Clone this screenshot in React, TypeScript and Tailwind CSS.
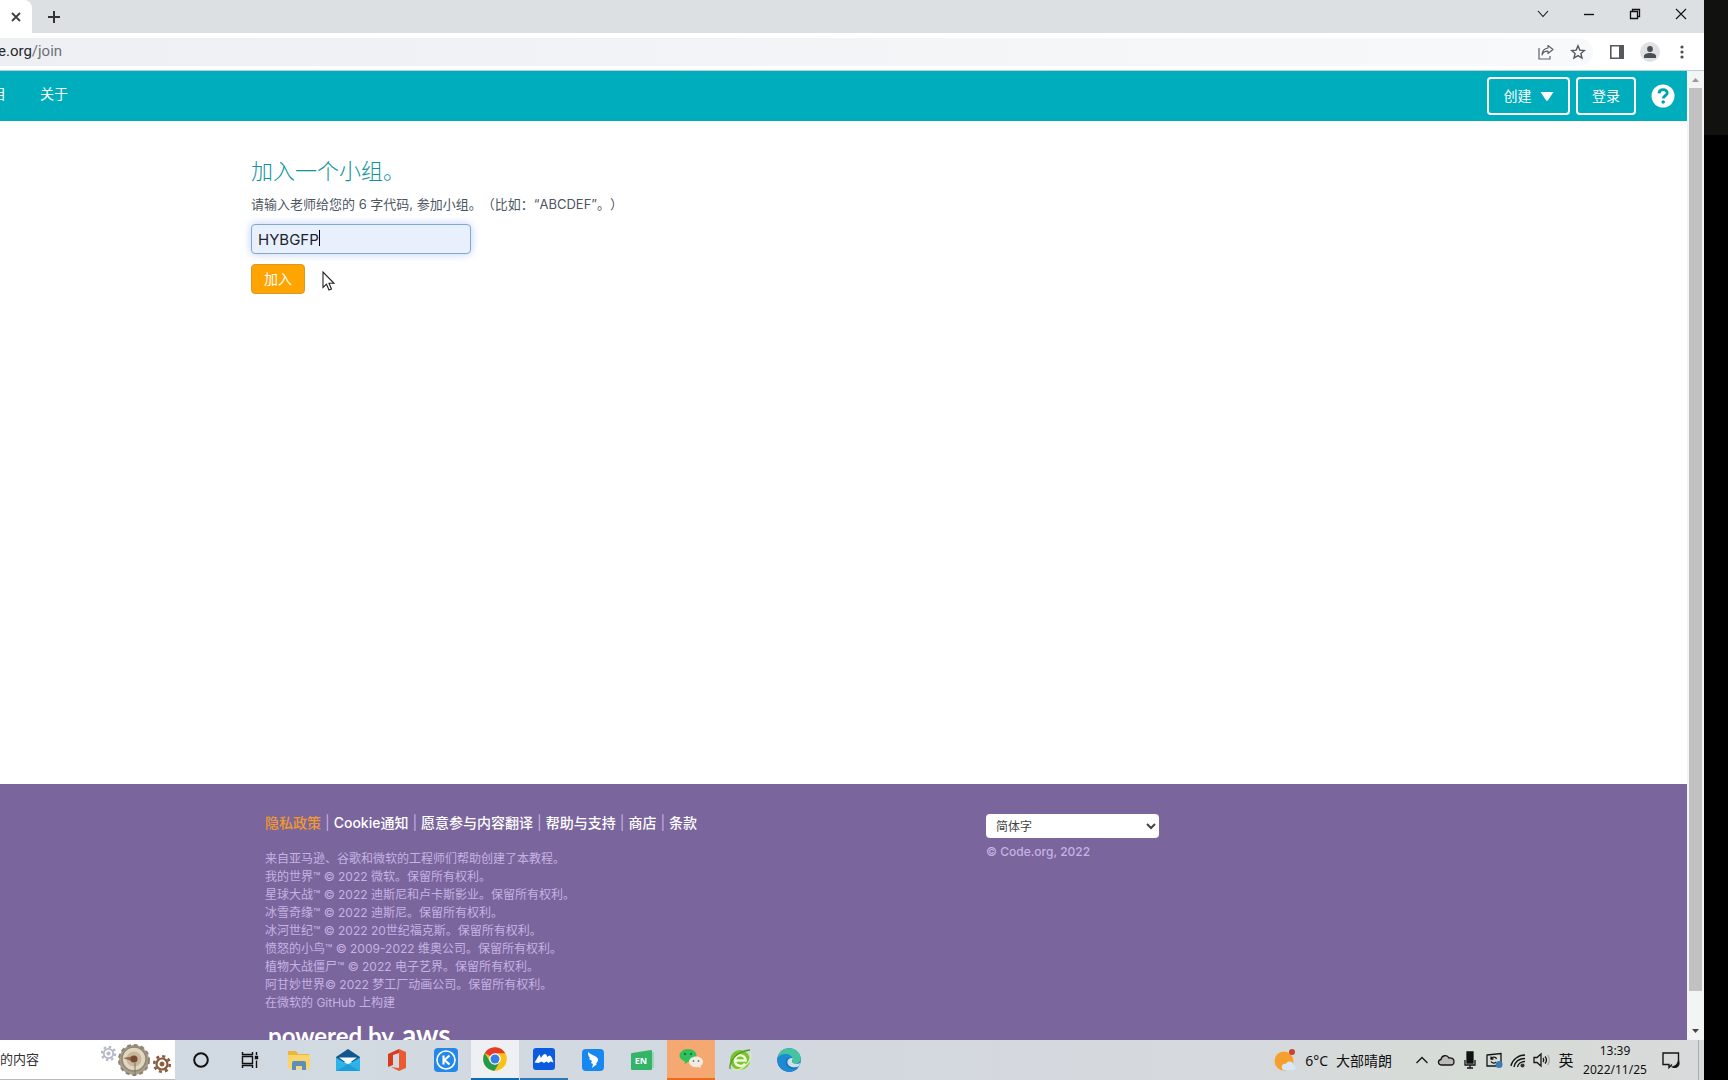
import type { ReactNode } from "react";

const CREDITS = [
  "来自亚马逊、谷歌和微软的工程师们帮助创建了本教程。",
  "我的世界™ © 2022 微软。保留所有权利。",
  "星球大战™ © 2022 迪斯尼和卢卡斯影业。保留所有权利。",
  "冰雪奇缘™ © 2022 迪斯尼。保留所有权利。",
  "冰河世纪™ © 2022 20世纪福克斯。保留所有权利。",
  "愤怒的小鸟™ © 2009-2022 维奥公司。保留所有权利。",
  "植物大战僵尸™ © 2022 电子艺界。保留所有权利。",
  "阿甘妙世界© 2022 梦工厂动画公司。保留所有权利。",
  "在微软的 GitHub 上构建",
];

const FOOTER_LINKS = ["Cookie通知", "愿意参与内容翻译", "帮助与支持", "商店", "条款"];

function WindowButton({ label, children }: { label: string; children: ReactNode }) {
  return (
    <button aria-label={label} className="flex h-7 w-[46px] items-center justify-center">
      <svg width="12" height="12" viewBox="0 0 12 12" fill="none" stroke="#111" strokeWidth="1.1">
        {children}
      </svg>
    </button>
  );
}

function TabStrip() {
  return (
    <div className="flex h-[33px] shrink-0 items-start bg-[#dce0e3]">
      <div className="flex h-full w-8 items-center justify-center rounded-tr-lg bg-white">
        <button aria-label="关闭标签页">
          <svg width="10" height="10" viewBox="0 0 10 10" stroke="#3c4043" strokeWidth="1.8">
            <path d="M1 1l8 8M9 1l-8 8" />
          </svg>
        </button>
      </div>
      <button aria-label="新标签页" className="ml-4 flex h-full items-center">
        <svg width="12" height="12" viewBox="0 0 12 12" stroke="#333" strokeWidth="2">
          <path d="M6 0v12M0 6h12" />
        </svg>
      </button>
      <div className="ml-auto flex">
        <WindowButton label="搜索标签页">
          <path d="M1 3l5 5.5L11 3" />
        </WindowButton>
        <WindowButton label="最小化">
          <path d="M1 6.5h10" strokeWidth="1.4" />
        </WindowButton>
        <WindowButton label="还原">
          <path d="M1.5 3.5h7v7h-7zM3.5 3.5v-2h7v7h-2" strokeWidth="1.3" />
        </WindowButton>
        <WindowButton label="关闭">
          <path d="M1 1l10 10M11 1L1 11" />
        </WindowButton>
      </div>
    </div>
  );
}

function AddressBar() {
  return (
    <div className="flex h-[38px] shrink-0 items-center border-b border-[#b9cfd2] bg-white">
      <div className="flex h-7 flex-1 items-center overflow-hidden rounded-r-full bg-linear-to-r from-[#eeeff3] to-[#f8f9fa] pr-[7px]">
        <span className="-ml-0.5 font-[Roboto] text-[15px] text-[#25282b]">
          e.org<span className="text-[#6d7175]">/join</span>
        </span>
        <button aria-label="分享" className="ml-auto">
          <svg width="16" height="16" viewBox="0 0 16 16" fill="none" stroke="#5f6368" strokeWidth="1.2">
            <path d="M1 4v11h11v-3" />
            <path d="M10 1.5l5 4-5 4V7.2C7 7 5 8.500 4 11c.2-4 2.200-6.500 6-7z" strokeLinejoin="round" />
          </svg>
        </button>
        <button aria-label="为此标签页添加书签" className="ml-4">
          <svg width="16" height="16" viewBox="0 0 16 16" fill="none" stroke="#55595d" strokeWidth="1.4">
            <path d="M8 1.800l1.800 4.300 4.600.4-3.500 3 1.100 4.500L8 11.600 4 14l1.100-4.500-3.500-3 4.600-.4z" />
          </svg>
        </button>
      </div>
      <button aria-label="侧边栏" className="ml-4">
        <svg width="16" height="16" viewBox="0 0 16 16">
          <path d="M1.800 1.800h12.400v12.400H1.800z" fill="none" stroke="#55595d" strokeWidth="1.600" />
          <path d="M10 2h5v12h-5z" fill="#55595d" />
        </svg>
      </button>
      <button aria-label="个人资料" className="ml-[15px] flex size-5 items-center justify-center rounded-full bg-[#dfe1e4]">
        <svg width="14" height="14" viewBox="0 0 14 14" fill="#4b4f54">
          <circle cx="7" cy="4" r="2.900" />
          <path d="M1 13v-2c0-2 3-3 6-3s6 1 6 3v2z" />
        </svg>
      </button>
      <button aria-label="菜单" className="mr-5 ml-5">
        <svg width="4" height="14" viewBox="0 0 4 14" fill="#4b4f54">
          <circle cx="2" cy="2" r="1.600" />
          <circle cx="2" cy="7" r="1.600" />
          <circle cx="2" cy="12" r="1.600" />
        </svg>
      </button>
    </div>
  );
}

function SiteHeader() {
  return (
    <header className="flex h-[50px] shrink-0 items-center bg-[#00adbc] pr-3 text-sm text-white">
      <nav className="flex gap-[34px] pb-1">
        <a href="#projects" className="flex w-1.5 justify-end overflow-hidden">
          目
        </a>
        <a href="#about">关于</a>
      </nav>
      <button className="ml-auto flex h-[38px] w-[83px] items-center justify-center gap-2 rounded border-2 border-white">
        创建
        <svg width="14" height="9" viewBox="0 0 14 9" fill="#fff">
          <path d="M.5 0h13L8 8.300q-1 1-2 0z" />
        </svg>
      </button>
      <button className="ml-1.5 h-[38px] w-[60px] rounded border-2 border-white">登录</button>
      <button aria-label="帮助" className="ml-[15px]">
        <svg width="24" height="24" viewBox="0 0 24 24">
          <circle cx="12" cy="12" r="11.500" fill="#fff" />
          <path d="M8 9.300c.4-5 8.400-4.600 8.200-.3-.1 2.800-3.900 2.700-3.900 5.500" fill="none" stroke="#00a3b2" strokeWidth="2.900" />
          <circle cx="12.200" cy="18" r="1.800" fill="#00a3b2" />
        </svg>
      </button>
    </header>
  );
}

function JoinForm() {
  return (
    <main className="relative flex-1 bg-white pt-[35px] pl-[251px]">
      <form onSubmit={(e) => e.preventDefault()} className="flex flex-col items-start">
        <h1 className="text-[22px] leading-[30px] font-light text-[#0f939d]">加入一个小组。</h1>
        <label htmlFor="code" className="mt-2 text-[13px] leading-5 text-[#4d575f]">
          请输入老师给您的 6 字代码, 参加小组。（比如：“ABCDEF”。）
        </label>
        <input
          id="code"
          defaultValue="HYBGFP"
          className="mt-2.5 h-[30px] w-[220px] rounded border border-[#82a9cc] bg-[#e8f0fe] px-1.5 text-[15px] text-[#20242c] shadow-[0_0_8px_rgba(82,140,236,0.4)] outline-none"
        />
        <button className="mt-2.5 h-[30px] w-[54px] rounded border border-[#d9982a] bg-[#ffa400] text-sm text-white">
          加入
        </button>
      </form>
      {/* text caret */}
      <span className="absolute top-[109px] left-[319px] h-4 w-px bg-black" />
      <svg className="absolute top-[150px] left-[322px]" width="14" height="20" viewBox="0 0 14 20">
        <path d="M1 1v15.500l3.500-3.300 2.500 5.800 2.500-1-2.500-5.700h5z" fill="#fff" stroke="#222" strokeWidth="1.100" />
      </svg>
    </main>
  );
}

function SiteFooter() {
  return (
    <footer className="flex h-64 shrink-0 overflow-hidden bg-[#7a659d] pt-[29px] pl-[265px] text-[#c5b3e2]">
      <div className="w-[721px] shrink-0">
        <div className="flex gap-1 text-sm leading-5 whitespace-nowrap">
          <a href="#privacy" className="font-medium text-[#f0982f]">
            隐私政策
          </a>
          {FOOTER_LINKS.map((link) => (
            <span key={link} className="flex gap-1">
              <span>|</span>
              <a href="#more" className="font-medium text-white">
                {link}
              </a>
            </span>
          ))}
        </div>
        <div className="mt-[17px] text-xs leading-[18px]">
          {CREDITS.map((line) => (
            <p key={line}>{line}</p>
          ))}
        </div>
        <p className="mt-1 flex items-baseline gap-2 pl-[3px] font-[Lato] leading-9 text-white">
          <span className="text-2xl font-bold">powered by</span>
          <span className="text-[28px] font-bold">aws</span>
        </p>
      </div>
      <div>
        <select
          aria-label="语言"
          className="mt-px block h-6 w-[173px] rounded-sm bg-white pl-1.5 text-xs text-[#444]"
          defaultValue="zh"
        >
          <option value="zh">简体字</option>
        </select>
        <p className="mt-1 text-xs leading-5 font-medium">© Code.org, 2022</p>
      </div>
    </footer>
  );
}

function Scrollbar() {
  return (
    <div className="flex w-[17px] shrink-0 flex-col items-center bg-[#f3f4f4]">
      <div className="flex h-[17px] items-center">
        <svg width="7" height="4" viewBox="0 0 7 4" fill="#999">
          <path d="M0 4l3.500-4L7 4z" />
        </svg>
      </div>
      <div className="w-[13px] flex-1 bg-[#c1c1c1]" />
      <div className="flex h-[49px] items-end pb-[7px]">
        <svg width="7" height="4" viewBox="0 0 7 4" fill="#444">
          <path d="M0 0l3.500 4L7 0z" />
        </svg>
      </div>
    </div>
  );
}

function Gear({ color, className, size }: { color: string; className: string; size: number }) {
  return (
    <svg className={className} width={size} height={size} viewBox="0 0 20 20" fill="none" stroke={color}>
      <circle cx="10" cy="10" r="5.500" strokeWidth="2.200" />
      <circle cx="10" cy="10" r="7.800" strokeWidth="2.600" strokeDasharray="3.060 3.060" />
      <circle cx="10" cy="10" r="2" fill={color} />
    </svg>
  );
}

function SearchBox() {
  return (
    <div className="flex w-[175px] shrink-0 items-center border-b border-[#bbb] bg-white">
      <input aria-label="搜索" placeholder="的内容" className="w-[100px] text-[13px] outline-none placeholder:text-[#333]" />
      <Gear color="#b6b9c6" size={17} className="mb-3 shrink-0" />
      <svg className="shrink-0" width="34" height="34" viewBox="0 0 34 34">
        <circle cx="17" cy="17" r="15" fill="#a99f8c" stroke="#8b8475" strokeWidth="2" strokeDasharray="4 3" />
        <circle cx="17" cy="16" r="12" fill="#dfd7c2" stroke="#8f8572" strokeWidth="1.500" />
        <circle cx="17" cy="16" r="7.500" fill="#c9b797" />
        <path d="M6 15l11-2v6z" fill="#9a6a4c" />
        <circle cx="17" cy="16" r="3.500" fill="#744a35" />
        <path d="M18 20v12" stroke="#7d7465" />
      </svg>
      <Gear color="#8b5a3a" size={20} className="mt-2 ml-px shrink-0" />
    </div>
  );
}

const TASKBAR_APPS: { name: string; tile?: string; icon: ReactNode }[] = [
  { name: "Cortana", icon: <circle cx="12" cy="12" r="6.800" fill="none" stroke="#111" strokeWidth="2" /> },
  {
    name: "任务视图",
    icon: (
      <g fill="none" stroke="#111" strokeWidth="1.400">
        <path d="M4.500 8.500h10v7h-10zM4.500 4v2.500h10V4M4.500 20v-2.500h10V20M18.500 4v3M18.500 12.500V20" />
        <path d="M17.500 8.500h2v2h-2z" fill="#111" />
      </g>
    ),
  },
  {
    name: "文件资源管理器",
    icon: (
      <>
        <path d="M1 3h8l2 3h11v15H1z" fill="#e9b63a" />
        <path d="M1 7h22v14H1z" fill="#fad56b" />
        <path d="M5 22v-7q0-2 2-2h10q2 0 2 2v7h-4v-4H9v4z" fill="#5b8fb9" />
      </>
    ),
  },
  {
    name: "邮件",
    icon: (
      <>
        <path d="M0 9L12 1l12 8v5H0z" fill="#12568e" />
        <path d="M0 9.500l12 7 12-7V23H0z" fill="#2bb3ea" />
        <path d="M0 23l12-7 12 7z" fill="#1c9edb" />
        <path d="M3 9.500h18l-9 6.500z" fill="#f5fbff" />
      </>
    ),
  },
  {
    name: "Office",
    icon: (
      <>
        <path d="M3 6l11-5v4L8 7v10l-5 2z" fill="#d83b1c" />
        <path d="M14 1l7 3v16l-7 3-8-4 8 1z" fill="#eb5a30" />
      </>
    ),
  },
  {
    name: "酷狗音乐",
    icon: (
      <>
        <rect width="24" height="24" rx="4" fill="#2388e8" />
        <circle cx="12" cy="12" r="9" fill="none" stroke="#fff" strokeWidth="1.600" />
        <path d="M9.500 7.500v9M15.500 7.500L10.500 12l5 4.500" fill="none" stroke="#fff" strokeWidth="2.200" />
      </>
    ),
  },
  {
    name: "Chrome",
    tile: "border-b-2 border-[#0f6cb4] bg-[#eff0f4]",
    icon: (
      <>
        <circle cx="12" cy="12" r="11.800" fill="#fbc116" />
        <path d="M12 12L1.800 6A11.800 11.800 0 0 1 22.200 6.200H12z" fill="#e33b2e" />
        <path d="M1.800 6A11.800 11.800 0 0 0 11.500 23.800L17 14.500 12 12 7 14.800z" fill="#249a4b" />
        <circle cx="12" cy="12" r="5.800" fill="#fff" />
        <circle cx="12" cy="12" r="4.500" fill="#3a7de8" />
      </>
    ),
  },
  {
    name: "腾讯会议",
    tile: "border-b-2 border-[#2d77b8]",
    icon: (
      <>
        <rect x="1" y="1" width="22" height="22" rx="3" fill="#0a5be0" />
        <path d="M2.500 15.500l5-8 1.500 3.500q2-4 4-4 1.500 0 2.500 3 1-1.500 2-1.500 2 0 4 7l-3-1-2 1.500-2-1.500-2.500 1.500-2.500-1.500-3 1.500z" fill="#fff" />
      </>
    ),
  },
  {
    name: "钉钉",
    icon: (
      <>
        <rect x="1" y="1" width="22" height="22" rx="4" fill="#1688ef" />
        <path d="M7 4c3 3 9 4 10 7 .5 2-1 3-2 5h1l-5 4 1-4-2-1 1-2-3-2 1-1c-2-2-2-4-2-6z" fill="#fff" />
      </>
    ),
  },
  {
    name: "EN",
    icon: (
      <>
        <path d="M1 6q0-1 1-1l19-3q1 0 1 1v18q0 1-1 1H2q-1 0-1-1z" fill="#34b469" />
        <path d="M23 4v16" stroke="#8ed5aa" strokeWidth="1.500" />
        <text x="11" y="16" textAnchor="middle" fontSize="9" fontWeight="700" fill="#fff">
          EN
        </text>
      </>
    ),
  },
  {
    name: "微信",
    tile: "border-b-2 border-[#ee6b1c] bg-[#f5a871]",
    icon: (
      <>
        <path d="M9 2c5 0 8.500 3 8.500 6.500S14 15 9 15l-3.500 2 .5-2.500C3 13 .5 11.500.5 8.500S4 2 9 2z" fill="#2fc15a" />
        <circle cx="6" cy="7" r="1.100" fill="#17642f" />
        <circle cx="12" cy="7" r="1.100" fill="#17642f" />
        <path d="M17 9.500c4 0 7 2.500 7 5.300 0 1.800-1 3.200-2.500 4.200l.5 2-2.500-1c-5.500 1-9.500-1.700-9.500-5.200 0-2.800 3-5.300 7-5.300z" fill="#f2ece2" />
        <circle cx="14.500" cy="14" r=".9" fill="#777" />
        <circle cx="19.500" cy="14" r=".9" fill="#777" />
      </>
    ),
  },
  {
    name: "360浏览器",
    icon: (
      <>
        <circle cx="12" cy="12" r="10" fill="#79c52e" />
        <path d="M17 15.500c-2 4-10 3-10-3 0-7 10-7 10.500 0H8" fill="none" stroke="#f2fbdc" strokeWidth="2.600" />
        <path d="M2 21C1 13 9 3 22 2" fill="none" stroke="#4f9c1f" strokeWidth="1.300" />
        <path d="M22 4c3 9-7 19-17 18" fill="none" stroke="#d6efae" strokeWidth="1.300" />
      </>
    ),
  },
  {
    name: "Edge",
    icon: (
      <>
        <circle cx="12" cy="12" r="11.800" fill="#1673c4" />
        <path d="M.5 10C2 3 7 .2 12 .2c7 0 11.800 5 11.800 10 0 4-3 5.500-6 5.500-2 0-3.500-1-2.500-2.500C17 9 12 6 8 7 4 7.500 1.500 9 .5 10z" fill="#43c5a0" />
        <path d="M.5 10C3 5.500 13 4 15 10c-6-2-9 5-4 9 3 2.500 7 2 10.500.5C16 27 3 25 .5 14z" fill="#1d8ad2" />
        <path d="M15.500 10c-5-.5-7 5-3 8 3 2 7 1.500 10 0l.500-3c-3 1.500-7 1-8-1-.3-1.500 1-2 .500-4z" fill="#d3dfe6" />
      </>
    ),
  },
];

function TrayIcon({ label, children }: { label: string; children: ReactNode }) {
  return (
    <button aria-label={label} className="flex w-6 justify-center">
      <svg width="18" height="18" viewBox="0 0 18 18" fill="none" stroke="#151515" strokeWidth="1.300">
        {children}
      </svg>
    </button>
  );
}

function Taskbar() {
  return (
    <div className="flex h-10 shrink-0 bg-linear-to-r from-[#d0dae3] via-[#d3d8df] to-[#d9dadb] font-['Noto_Sans','Noto_Sans_CJK_SC',sans-serif] text-[#111]">
      <SearchBox />
      <div className="flex pl-0.5">
        {TASKBAR_APPS.map((app) => (
          <button
            key={app.name}
            aria-label={app.name}
            className={`mr-px flex w-12 items-center justify-center ${app.tile ?? ""}`}
          >
            <svg width="24" height="24" viewBox="0 0 24 24">
              {app.icon}
            </svg>
          </button>
        ))}
      </div>
      <div className="ml-auto flex items-center bg-linear-to-r from-transparent via-[#d6dcd6] to-[#d9dadb] pl-5">
        <button className="mr-[18px] flex items-center text-[14px]">
          <svg className="mr-2" width="24" height="24" viewBox="0 0 24 24">
            <circle cx="11" cy="13" r="9.500" fill="#f5a02d" />
            <circle cx="19" cy="4" r="3" fill="#c8432f" />
            <path d="M9 20c-1-4 3-5 4-4 1-4 8-3 7 1 4 1 3 5 0 5h-8q-3 0-3-2z" fill="#d9e6f6" />
          </svg>
          <span>6°C</span>
          <span className="ml-2">大部晴朗</span>
        </button>
        <TrayIcon label="显示隐藏的图标">
          <path d="M3.500 12L9 6.500l5.500 5.500" />
        </TrayIcon>
        <TrayIcon label="OneDrive">
          <path d="M5 14c-4.500 0-4.500-5-1-5.500C4.500 4.500 10 3 12 7c3-.5 5 1 5 3.500S15.500 14 14 14z" fill="#bbb" />
        </TrayIcon>
        <TrayIcon label="麦克风">
          <path d="M6 1h6v11H6z" fill="#111" />
          <path d="M4 9v5h10V9M9 14v3M6 17h6" />
        </TrayIcon>
        <TrayIcon label="同步">
          <path d="M2 4l14-1.500V15H2z" />
          <path d="M6 8c1-2.500 5-2.500 5.500 0M6 10.500c1 2 4 2 5 .5M6 5.500V8h2.500" />
          <circle cx="14" cy="13.500" r="3.500" fill="#3c7bb8" stroke="none" />
        </TrayIcon>
        <TrayIcon label="网络">
          <path d="M2 15C3 9 9 4 16 4M5 16c1-5 5-8.500 11-8.500M8.500 16c.5-3 3.500-5.500 7.500-5.500" />
          <circle cx="13.500" cy="14.500" r="2" fill="#333" stroke="none" />
        </TrayIcon>
        <TrayIcon label="音量">
          <path d="M1 6.500h3L8 3v12l-4-3.500H1z" />
          <path d="M10 7q1.500 2 0 4M12 5.500q3 3.500 0 7" />
          <path d="M14.500 4q4 5 0 10" stroke="#aaa" />
        </TrayIcon>
        <button className="w-6 text-[15px]">英</button>
        <div className="flex w-[74px] flex-col items-center text-[12px] leading-[19px]">
          <span>13:39</span>
          <span>2022/11/25</span>
        </div>
        <button aria-label="通知" className="ml-2.5">
          <svg width="18" height="18" viewBox="0 0 18 18" fill="none" stroke="#151515" strokeWidth="1.400">
            <path d="M10 13.500L7 16.500v-3H1V2h15.500v8" />
            <path d="M16.500 10c-1 4-3.500 5.500-5.500 6 4 1.500 7-2 5.500-6z" fill="#151515" />
          </svg>
        </button>
        <div className="ml-[18px] h-full w-1.5 border-l border-[#aaa]" />
      </div>
    </div>
  );
}

export default function App() {
  return (
    <div className="flex min-h-screen bg-black font-[Inter,'Noto_Sans_CJK_SC',sans-serif] [text-spacing-trim:space-all]">
      <div className="flex min-w-0 flex-1 flex-col">
        <TabStrip />
        <AddressBar />
        <div className="flex flex-1">
          <div className="flex min-w-0 flex-1 flex-col">
            <SiteHeader />
            <JoinForm />
            <SiteFooter />
          </div>
          <Scrollbar />
        </div>
        <Taskbar />
      </div>
      <div className="w-6 shrink-0">
        <div className="h-[135px] bg-[#111210]" />
      </div>
    </div>
  );
}
